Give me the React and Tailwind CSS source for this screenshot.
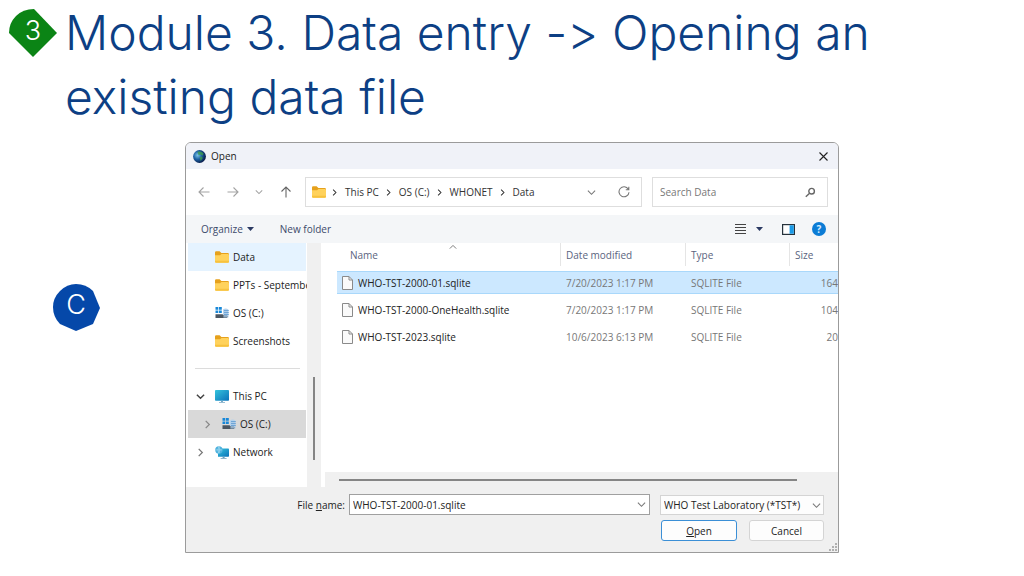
import React from 'react';

const Chevron = ({ className = '', dir = 'down', size = 8, width = 1 }) => {
  const d = { down: 'M1 3 L5 7 L9 3', right: 'M3 1 L7 5 L3 9', up: 'M1 7 L5 3 L9 7' }[dir];
  return (
    <svg className={className} width={size} height={size} viewBox="0 0 10 10" fill="none" stroke="currentColor" strokeWidth={width} aria-hidden="true">
      <path d={d} />
    </svg>
  );
};

const Arrow = ({ path }) => (
  <svg width="12" height="12" viewBox="0 0 12 12" fill="none" stroke="currentColor" strokeWidth="1.1" aria-hidden="true">
    <path d={path} />
  </svg>
);

const Folder = () => (
  <svg className="shrink-0" width="14" height="12" viewBox="0 0 14 12" aria-hidden="true">
    <path d="M0 1.5Q0 .3 1.2.3H4.6L6.4 2H12.6Q14 2 14 3.2V6H0Z" fill="#e6a11c" />
    <path d="M0 4.2H5L6.5 3H12.8Q14 3 14 4.2V10.6Q14 11.8 12.8 11.8H1.2Q0 11.8 0 10.6Z" fill="#ffd25c" />
    <path d="M0 9.8H14V10.6Q14 11.8 12.8 11.8H1.2Q0 11.8 0 10.6Z" fill="#f7c23f" />
  </svg>
);

const Drive = () => (
  <svg className="shrink-0" width="14" height="12" viewBox="0 0 14 12" aria-hidden="true">
    <path d="M.5 0H3.3V2.7H.5ZM4 0H6.8V2.7H4ZM.5 3.4H3.3V6.1H.5ZM4 3.4H6.8V6.1H4Z" fill="#1787d8" />
    <path d="M8 2.4Q10.7.4 13.4 2.4V9.6H8Z" fill="#b5d2ec" />
    <path d="M9 3.6H13.8M9 5.6H13.8M9 7.6H13.8" stroke="#5f9ad0" strokeWidth=".9" />
    <path d="M.5 7.2H7.6L8.8 8.8H12V11H.5Z" fill="#4b5661" />
    <path d="M8.4 9H13.2V10.6H8.4Z" fill="#8fabc4" />
  </svg>
);

const Monitor = ({ network }) => (
  <svg className="shrink-0" width="14" height="13" viewBox="0 0 14 13" aria-hidden="true">
    <defs>
      <linearGradient id="screen" x1="0" y1="0" x2="1" y2="1">
        <stop offset="0" stopColor="#35c4dc" />
        <stop offset="1" stopColor="#0a72ba" />
      </linearGradient>
    </defs>
    {network ? (
      <>
        <path d="M3 2.6H13.2Q14 2.6 14 3.4V10Q14 10.8 13.2 10.8H3Z" fill="url(#screen)" />
        <path d="M7.6 10.8H9.6V12H11.6V12.8H5.6V12H7.6Z" fill="#6c9cba" />
        <circle cx="3.9" cy="3.9" r="3.7" fill="#4fb2de" />
        <path d="M.5 3.9H7.2M3.9.4Q2 3.9 3.9 7.4M3.9.4Q5.8 3.9 3.9 7.4" stroke="#c3e8f7" strokeWidth=".5" fill="none" />
      </>
    ) : (
      <>
        <rect width="14" height="10.8" rx=".8" fill="url(#screen)" />
        <path d="M6 10.8H8V12H10V12.8H4V12H6Z" fill="#79a9c5" />
      </>
    )}
  </svg>
);

const FileIcon = () => (
  <svg className="shrink-0" width="11" height="14" viewBox="0 0 11 14" fill="#fafafa" stroke="#8a8a8a" aria-hidden="true">
    <path d="M.5.5H7L10.5 4V13.5H.5Z" />
    <path d="M7 .5V4H10.5" fill="none" />
  </svg>
);

const Globe = () => (
  <svg width="13" height="13" viewBox="0 0 13 13" aria-hidden="true">
    <defs>
      <radialGradient id="globe" cx=".35" cy=".4" r=".7">
        <stop offset="0" stopColor="#7cc4e6" />
        <stop offset=".45" stopColor="#1d62a6" />
        <stop offset="1" stopColor="#04103a" />
      </radialGradient>
    </defs>
    <circle cx="6.5" cy="6.5" r="6.4" fill="url(#globe)" />
    <path d="M4.5 1.8Q8 .6 10.5 3.4L9.6 5.4 7.4 4.6 5.6 5.2ZM6.6 7L9 6.6 9.6 8.6 7.6 11Z" fill="#3fa044" opacity=".75" />
  </svg>
);

const crumbs = ['This PC', 'OS (C:)', 'WHONET', 'Data'];

const pinned = [
  { name: 'Data', icon: <Folder />, hot: true },
  { name: 'PPTs - September', icon: <Folder /> },
  { name: 'OS (C:)', icon: <Drive /> },
  { name: 'Screenshots', icon: <Folder /> },
];

const files = [
  { name: 'WHO-TST-2000-01.sqlite', date: '7/20/2023 1:17 PM', size: '164', selected: true },
  { name: 'WHO-TST-2000-OneHealth.sqlite', date: '7/20/2023 1:17 PM', size: '104' },
  { name: 'WHO-TST-2023.sqlite', date: '10/6/2023 6:13 PM', size: '20' },
];

function NavBar() {
  return (
    <div className="flex h-[46px] items-center bg-white pr-[10px] pl-3 text-[#a3a3a3]">
      <div className="flex w-[107px] shrink-0 items-center justify-between pr-[13px]">
        <button aria-label="Back"><Arrow path="M11.5 6H1M5.5 1.5L1 6L5.5 10.5" /></button>
        <button aria-label="Forward" className="pl-2"><Arrow path="M.5 6H11M6.5 1.5L11 6L6.5 10.5" /></button>
        <button aria-label="Recent locations" className="pl-2"><Chevron size={8} width={1.3} /></button>
        <button aria-label="Up" className="pl-2 text-[#666]"><Arrow path="M6 11.5V1M1.5 5.5L6 1L10.5 5.5" /></button>
      </div>
      <nav aria-label="Path" className="flex h-[30px] flex-1 items-center border border-[#dedede] pr-[11px] pl-[6px] text-[#333]">
        <Folder />
        {crumbs.map((c) => (
          <React.Fragment key={c}>
            <Chevron dir="right" size={7} width={1.5} className="mx-[5px] shrink-0 first-of-type:mr-1" />
            <a href="#" className="pr-px pl-[2px] whitespace-nowrap">{c}</a>
          </React.Fragment>
        ))}
        <button aria-label="Previous locations" className="ml-auto text-[#777]"><Chevron size={9} width={1.2} /></button>
        <button aria-label="Refresh" className="ml-[22px] text-[#777]">
          <svg width="12" height="12" viewBox="0 0 12 12" fill="none" stroke="currentColor" strokeWidth="1.1">
            <path d="M10.3 3.2A5 5 0 1 0 11 6.2M10.8.8V3.7H7.8" />
          </svg>
        </button>
      </nav>
      <label className="ml-[10px] flex h-[30px] w-[176px] items-center border border-[#dedede] px-[7px]">
        <input type="search" aria-label="Search Data" placeholder="Search Data" className="min-w-0 flex-1 bg-transparent outline-none placeholder:text-[#777]" />
        <svg className="mr-[4px] text-[#666]" width="11" height="11" viewBox="0 0 11 11" fill="none" stroke="currentColor" strokeWidth="1.4" aria-hidden="true">
          <circle cx="6.6" cy="4.2" r="2.8" />
          <path d="M4.6 6.2L.8 9.8" />
        </svg>
      </label>
    </div>
  );
}

function Toolbar() {
  return (
    <div className="flex h-[28px] items-center bg-[#f4f6f8] pr-3 pl-[15px] text-[#3d4a6b]">
      <button className="flex items-center gap-1">
        Organize
        <svg width="7" height="4" viewBox="0 0 7 4" aria-hidden="true"><path d="M0 0H7L3.5 4Z" fill="#2b3a63" /></svg>
      </button>
      <button className="ml-[26px]">New folder</button>
      <button aria-label="Change view" className="ml-auto flex items-center gap-[10px]">
        <svg width="11" height="10" viewBox="0 0 11 10" aria-hidden="true"><path d="M0 .5H11M0 3.5H11M0 6.5H11M0 9.5H11" stroke="#444" /></svg>
        <svg width="7" height="4" viewBox="0 0 7 4" aria-hidden="true"><path d="M0 0H7L3.5 4Z" fill="#2b3a63" /></svg>
      </button>
      <button aria-label="Preview pane" className="ml-[19px]">
        <svg width="13" height="11" viewBox="0 0 13 11" aria-hidden="true">
          <rect x=".6" y=".6" width="11.8" height="9.8" fill="#fff" stroke="#26323c" strokeWidth="1.2" />
          <path d="M7.6 1.2H11.8V9.8H7.6Z" fill="#1a9be8" />
        </svg>
      </button>
      <button aria-label="Help" className="ml-[17px] flex size-[14px] items-center justify-center rounded-full bg-[#0c7cd5] text-[10px] leading-none font-bold text-[#d5ecff]">?</button>
    </div>
  );
}

function SideTree() {
  return (
    <aside className="flex w-[135px] shrink-0 bg-[#f0f0f0]">
      <div className="w-[121px] overflow-hidden bg-white pb-[21px] pl-[2px]">
        {pinned.map((p) => (
          <a key={p.name} href="#" className={`mr-px flex h-[28px] items-center gap-1 pl-[27px] whitespace-nowrap ${p.hot ? 'bg-[#e5f3ff]' : ''}`}>
            {p.icon}{p.name}
          </a>
        ))}
        <hr className="mt-[13px] mr-[7px] mb-[13px] ml-[7px] border-[#dcdcdc]" />
        <a href="#" className="mr-px flex h-[28px] items-center gap-1 pl-[8px]">
          <Chevron size={9} width={1.6} className="mr-[6px] text-[#444]" /><Monitor />This PC
        </a>
        <a href="#" className="mr-px flex h-[28px] items-center gap-1 bg-[#d9d9d9] pl-[15px]">
          <Chevron dir="right" size={9} width={1.4} className="mr-[6px] text-[#888]" /><Drive />OS (C:)
        </a>
        <a href="#" className="mr-px flex h-[28px] items-center gap-1 pl-[8px]">
          <Chevron dir="right" size={9} width={1.4} className="mr-[6px] text-[#777]" /><Monitor network />Network
        </a>
      </div>
      <div className="flex flex-1 items-end justify-center pb-[27px]">
        <div className="h-[83px] w-[2px] bg-[#858585]" />
      </div>
    </aside>
  );
}

function FileList() {
  const cell = 'h-[27px] border-b-4 border-transparent bg-clip-padding p-0 overflow-hidden whitespace-nowrap';
  const hot = 'bg-[#cce8ff] shadow-[inset_0_1px_#a9d8fb,inset_0_-1px_#a9d8fb]';
  const head = 'flex h-[23px] items-center';
  return (
    <div className="flex min-w-0 flex-1 flex-col bg-white">
      <div className="flex-1 pl-4">
        <table className="w-full table-fixed border-separate border-spacing-0 text-left">
          <colgroup>
            <col />
            <col className="w-[125px]" />
            <col className="w-[104px]" />
            <col className="w-[49px]" />
          </colgroup>
          <thead className="text-[#5a6480]">
            <tr>
              <th className="relative h-[28px] p-0 align-top font-normal">
                <div className={`${head} pl-[13px]`}>Name</div>
                <Chevron dir="up" size={8} width={1.2} className="absolute top-0 left-1/2 text-[#777]" />
              </th>
              <th className="p-0 align-top font-normal"><div className={`${head} border-l border-[#e5e5e5] pl-[5px]`}>Date modified</div></th>
              <th className="p-0 align-top font-normal"><div className={`${head} border-l border-[#e5e5e5] pl-[5px]`}>Type</div></th>
              <th className="p-0 align-top font-normal"><div className={`${head} border-l border-[#e5e5e5] pl-[5px]`}>Size</div></th>
            </tr>
          </thead>
          <tbody className="text-[#777]">
            {files.map((f) => (
              <tr key={f.name}>
                <td className={`${cell} ${f.selected ? hot : ''}`}>
                  <div className="flex items-center gap-[5px] pl-[5px] text-[#222]"><FileIcon />{f.name}</div>
                </td>
                <td className={`${cell} pl-[6px] ${f.selected ? hot : ''}`}>{f.date}</td>
                <td className={`${cell} pl-[6px] ${f.selected ? hot : ''}`}>SQLITE File</td>
                <td className={`${cell} text-right ${f.selected ? hot : ''}`}>{f.size}</td>
              </tr>
            ))}
          </tbody>
        </table>
      </div>
      <div className="ml-1 flex h-[15px] items-center bg-[#f0f0f0] pr-[41px] pl-[14px]">
        <div className="h-[2px] flex-1 bg-[#858585]" />
      </div>
    </div>
  );
}

function Footer() {
  return (
    <div className="relative flex flex-col gap-[5px] bg-[#f0f0f0] pt-[7px] pr-[14px] pb-[11px]">
      <div className="flex items-center">
        <label htmlFor="file-name" className="w-[163px] shrink-0 pr-[4px] text-right"><span>File <u>n</u>ame:</span></label>
        <div className="flex h-[21px] flex-1 items-center border border-[#a0a0a0] bg-white pr-[3px] pl-[3px]">
          <input id="file-name" defaultValue="WHO-TST-2000-01.sqlite" className="min-w-0 flex-1 bg-transparent outline-none" />
          <Chevron size={9} width={1.2} className="text-[#777]" />
        </div>
        <div className="relative ml-[10px] w-[164px]">
          <select aria-label="File type" className="h-[20px] w-full appearance-none border border-[#d4d4d4] bg-[#fdfdfd] pl-[3px]">
            <option>WHO Test Laboratory (*TST*)</option>
          </select>
          <Chevron size={9} width={1.2} className="pointer-events-none absolute top-[6px] right-[3px] text-[#777]" />
        </div>
      </div>
      <div className="flex justify-end gap-3">
        <button className="h-[21px] w-[76px] rounded-[3px] border border-[#3b8fd6] bg-[#fdfdfd]"><u>O</u>pen</button>
        <button className="h-[21px] w-[75px] rounded-[3px] border border-[#d4d4d4] bg-[#fdfdfd]">Cancel</button>
      </div>
      <svg className="absolute right-0 bottom-0" width="10" height="10" viewBox="0 0 10 10" fill="#b0b0b0" aria-hidden="true">
        <path d="M7 1h2v2H7zM7 4h2v2H7zM4 4h2v2H4zM7 7h2v2H7zM4 7h2v2H4zM1 7h2v2H1z" />
      </svg>
    </div>
  );
}

export default function App() {
  return (
    <main className="min-h-screen bg-white">
      <header className="flex gap-2 pt-[1px] pl-[9px]">
        <div className="relative mt-2 size-[48px] shrink-0">
          <svg width="48" height="48" viewBox="0 0 48 48" aria-hidden="true">
            <path d="M25 0L48 24L24 48L0 24Q0 14 7 7Q14 0 25 0Z" fill="#0b8415" />
          </svg>
          <span className="absolute inset-0 flex items-center justify-center pb-[3px] font-['Inter'] text-[27px] font-light text-white">3</span>
        </div>
        <h1 className="font-['Inter',sans-serif] text-[48px] leading-[64px] font-light text-[#0d3f84] [font-feature-settings:'calt'_0]">
          Module 3. Data entry -&gt; Opening an<br />existing data file
        </h1>
      </header>
      <div className="mt-[13px] flex">
        <div className="w-[185px] shrink-0 pt-[142px] pl-[53px]">
          <div className="relative size-[47px]">
            <svg width="47" height="47" viewBox="0 0 47 47" aria-hidden="true">
              <path d="M23 0Q33 0 40 7L47 24L40 40L23 47L7 40Q0 33 0 23Q0 14 7 7Q14 0 23 0Z" fill="#0548a9" />
            </svg>
            <span className="absolute inset-0 flex items-center justify-center pr-[1px] pb-[4px] font-['Inter'] text-[27px] font-light text-white">C</span>
          </div>
        </div>
        <section role="dialog" aria-label="Open" className="min-w-0 flex-1 overflow-hidden rounded-t-[6px] border border-[#9b9b9b] font-['Open_Sans',sans-serif] text-[10px] leading-[14px] text-[#222]">
          <div className="flex h-[26px] items-center gap-[5px] bg-[#f0f2f8] pr-[10px] pl-[7px]">
            <Globe />
            <h2>Open</h2>
            <button aria-label="Close" className="ml-auto text-[#222]">
              <svg width="9" height="9" viewBox="0 0 9 9" stroke="currentColor" strokeWidth="1.1"><path d="M.5.5L8.5 8.5M8.5.5L.5 8.5" /></svg>
            </button>
          </div>
          <NavBar />
          <Toolbar />
          <div className="flex">
            <SideTree />
            <FileList />
          </div>
          <Footer />
        </section>
        <div className="w-[185px] shrink-0" />
      </div>
    </main>
  );
}
